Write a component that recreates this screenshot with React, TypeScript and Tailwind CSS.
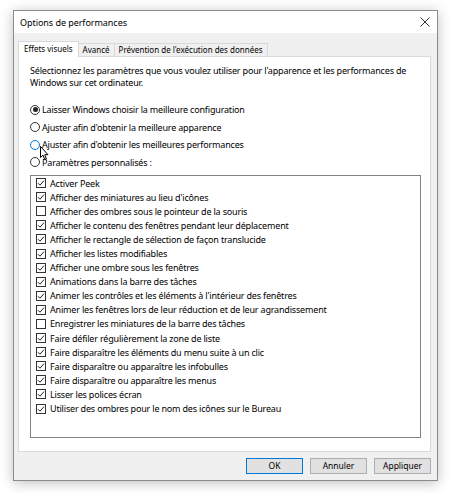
import React from "react";

const items: { label: string; checked: boolean }[] = [
  { label: "Activer Peek", checked: true },
  { label: "Afficher des miniatures au lieu d'icônes", checked: true },
  { label: "Afficher des ombres sous le pointeur de la souris", checked: false },
  { label: "Afficher le contenu des fenêtres pendant leur déplacement", checked: true },
  { label: "Afficher le rectangle de sélection de façon translucide", checked: true },
  { label: "Afficher les listes modifiables", checked: true },
  { label: "Afficher une ombre sous les fenêtres", checked: true },
  { label: "Animations dans la barre des tâches", checked: true },
  { label: "Animer les contrôles et les éléments à l'intérieur des fenêtres", checked: true },
  { label: "Animer les fenêtres lors de leur réduction et de leur agrandissement", checked: true },
  { label: "Enregistrer les miniatures de la barre des tâches", checked: false },
  { label: "Faire défiler régulièrement la zone de liste", checked: true },
  { label: "Faire disparaître les éléments du menu suite à un clic", checked: true },
  { label: "Faire disparaître ou apparaître les infobulles", checked: true },
  { label: "Faire disparaître ou apparaître les menus", checked: true },
  { label: "Lisser les polices écran", checked: true },
  { label: "Utiliser des ombres pour le nom des icônes sur le Bureau", checked: true },
];

const radios = [
  { label: "Laisser Windows choisir la meilleure configuration", selected: true, hover: false },
  { label: "Ajuster afin d'obtenir la meilleure apparence", selected: false, hover: false },
  { label: "Ajuster afin d'obtenir les meilleures performances", selected: false, hover: true },
  { label: "Paramètres personnalisés :", selected: false, hover: false },
];

function Radio({ selected, hover }: { selected: boolean; hover: boolean }) {
  return (
    <span
      className={`w-[10px] h-[10px] rounded-full border bg-white flex items-center justify-center shrink-0 ${
        hover ? "border-[#0078d7]" : "border-[#333]"
      }`}
    >
      {selected && <span className="w-[5px] h-[5px] rounded-full bg-[#222]" />}
    </span>
  );
}

function Checkbox({ checked }: { checked: boolean }) {
  return (
    <span className="w-[10px] h-[10px] border border-[#333] bg-white flex items-center justify-center shrink-0">
      {checked && (
        <svg width="8" height="8" viewBox="0 0 8 8">
          <path d="M1 4.2 L3 6.2 L7 1.6" fill="none" stroke="#222" strokeWidth="1" />
        </svg>
      )}
    </span>
  );
}

export default function App() {
  return (
    <div className="w-[450px] h-[493px] bg-white relative font-['Noto_Sans',sans-serif] text-black">
      <div className="pt-[10px] pl-[13px]">
        <div className="w-[425px] h-[471px] border border-[#8c8c8c] bg-[#f0f0f0] flex flex-col shadow-[0_2px_12px_rgba(0,0,0,0.25)]">
          {/* title bar */}
          <div className="h-[22px] bg-white flex items-center justify-between pl-[6px] pr-[7px]">
            <span className="text-[9px] leading-none tracking-[-0.05px]">Options de performances</span>
            <svg width="10" height="10" viewBox="0 0 10 10">
              <path d="M0.5 0.5 L9.5 9.5 M9.5 0.5 L0.5 9.5" stroke="#333" strokeWidth="1" />
            </svg>
          </div>

          {/* tabs */}
          <div className="pl-[4px] pt-[8px] flex items-end relative z-10 text-[8px] leading-none">
            <div className="h-[16px] px-[5px] flex items-center bg-white border border-b-0 border-[#d9d9d9] -mb-px pb-[2px]">
              Effets visuels
            </div>
            <div className="h-[13px] px-[4px] flex items-center border border-l-0 border-b-0 border-[#d9d9d9]">
              Avancé
            </div>
            <div className="h-[13px] px-[4px] flex items-center border border-l-0 border-b-0 border-[#d9d9d9]">
              Prévention de l'exécution des données
            </div>
          </div>

          {/* panel */}
          <div className="ml-[4px] w-[413px] h-[396px] bg-white border border-[#d9d9d9] pl-[11px] pr-[9px] pt-[8px] text-[9px] tracking-[-0.18px]">
            <p className="leading-[12px]">
              Sélectionnez les paramètres que vous voulez utiliser pour l'apparence et les performances de
              Windows sur cet ordinateur.
            </p>
            <div className="mt-[12px] flex flex-col">
              {radios.map((r) => (
                <div key={r.label} className="h-[17.5px] flex items-center gap-[2px] leading-none">
                  <Radio selected={r.selected} hover={r.hover} />
                  <span>{r.label}</span>
                </div>
              ))}
            </div>
            <div className="mt-[4px] h-[263px] border border-[#828282] pl-[5px]">
              {items.map((it) => (
                <div key={it.label} className="h-[14.1px] flex items-center gap-[4px] leading-none">
                  <Checkbox checked={it.checked} />
                  <span>{it.label}</span>
                </div>
              ))}
            </div>
          </div>

          {/* buttons */}
          <div className="flex justify-end gap-[7px] pr-[6px] pt-[6px] text-[8.5px] leading-none">
            <button className="w-[57px] h-[16px] bg-[#e1e1e1] border border-[#0078d7]">OK</button>
            <button className="w-[57px] h-[16px] bg-[#e1e1e1] border border-[#adadad]">Annuler</button>
            <button className="w-[57px] h-[16px] bg-[#e1e1e1] border border-[#adadad]">Appliquer</button>
          </div>
        </div>
      </div>

      {/* mouse pointer */}
      <svg className="absolute left-[40px] top-[146px]" width="9" height="15" viewBox="0 0 9 15">
        <path
          d="M0.5 0.5 L0.5 11.5 L3 9.2 L4.8 13.5 L6.4 12.8 L4.7 8.7 L8 8.7 Z"
          fill="#fff"
          stroke="#000"
          strokeWidth="1"
          strokeLinejoin="round"
        />
      </svg>
    </div>
  );
}
